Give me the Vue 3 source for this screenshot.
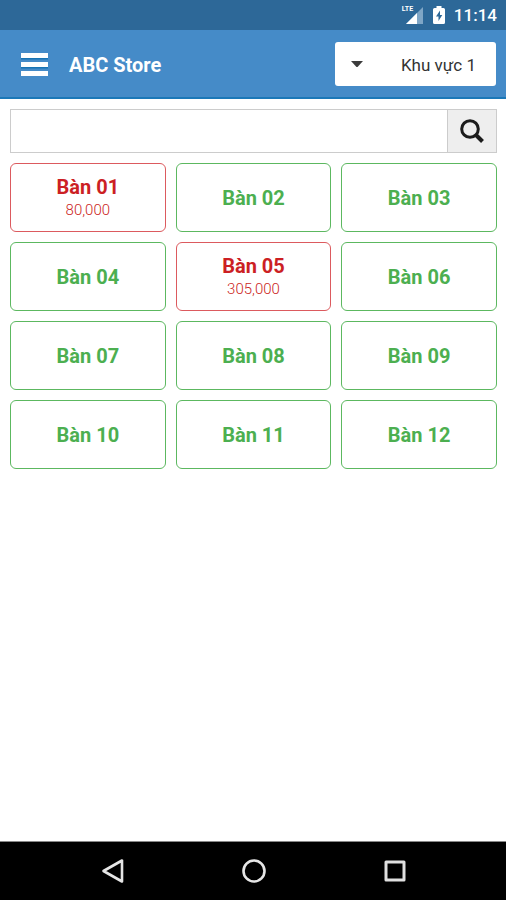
<script setup>
import { ref } from 'vue'

const area = ref('Khu vực 1')
const areas = ['Khu vực 1']
const keyword = ref('')

const tables = [
  { name: 'Bàn 01', total: '80,000' },
  { name: 'Bàn 02' },
  { name: 'Bàn 03' },
  { name: 'Bàn 04' },
  { name: 'Bàn 05', total: '305,000' },
  { name: 'Bàn 06' },
  { name: 'Bàn 07' },
  { name: 'Bàn 08' },
  { name: 'Bàn 09' },
  { name: 'Bàn 10' },
  { name: 'Bàn 11' },
  { name: 'Bàn 12' },
]
</script>

<template>
  <div class="screen">
    <div class="status">
      <div class="signal">
        <span class="lte">LTE</span>
        <svg width="22" height="18" viewBox="0 0 22 18" aria-hidden="true">
          <path d="M4 18 L21 1 V18 Z" fill="#7fa6c6" />
          <path d="M4 18 L15 7 V18 Z" fill="#fff" />
        </svg>
      </div>
      <svg class="battery" width="12" height="18" viewBox="0 0 12 18" aria-hidden="true">
        <path d="M3.500 0 H8.500 V2 H10.500 Q12 2 12 3.500 V16.500 Q12 18 10.500 18 H1.500 Q0 18 0 16.500 V3.500 Q0 2 1.500 2 H3.500 Z" fill="#fff" />
        <path d="M7 4.500 L3 10.500 H5.500 V15 L9.300 9 H7 Z" fill="#2d6898" />
      </svg>
      <span class="clock">11:14</span>
    </div>

    <header class="bar">
      <button class="menu" type="button" aria-label="Menu">
        <svg width="27" height="24" viewBox="0 0 27 24" aria-hidden="true">
          <path d="M0 6.500 H27 M0 15.500 H27" stroke="#1874b4" stroke-width="2" />
          <path d="M0 3.500 H27 M0 12.500 H27 M0 21.500 H27" stroke="#fff" stroke-width="5" />
        </svg>
      </button>
      <h1 class="title">ABC Store</h1>
      <div class="picker">
        <svg class="caret" width="14" height="8" viewBox="0 0 14 8" aria-hidden="true">
          <path d="M1 1 H13 L8 6.500 Q7 7.500 6 6.500 Z" fill="#3c3c3c" />
        </svg>
        <select v-model="area" class="select" aria-label="Khu vực">
          <option v-for="a in areas" :key="a">{{ a }}</option>
        </select>
      </div>
    </header>

    <main class="content">
      <form class="search" @submit.prevent>
        <input v-model="keyword" class="field" type="text" aria-label="Tìm kiếm" />
        <button class="go" type="submit" aria-label="Tìm kiếm">
          <svg width="26" height="26" viewBox="0 0 26 26" fill="none" stroke="#1c1c1c" aria-hidden="true">
            <circle cx="11" cy="11" r="8.300" stroke-width="3" />
            <path d="M17 17 L23.500 23.500" stroke-width="4" />
          </svg>
        </button>
      </form>

      <div class="grid">
        <button
          v-for="t in tables"
          :key="t.name"
          type="button"
          class="table"
          :class="{ busy: t.total }"
        >
          <span class="name">{{ t.name }}</span>
          <span v-if="t.total" class="total">{{ t.total }}</span>
        </button>
      </div>
    </main>

    <nav class="nav">
      <button type="button" aria-label="Quay lại">
        <svg width="24" height="26" viewBox="0 0 24 26" fill="none" stroke="#e6e6e6" stroke-width="2.600" stroke-linejoin="round" aria-hidden="true">
          <path d="M2.500 13 L21 2.500 V23.500 Z" />
        </svg>
      </button>
      <button type="button" aria-label="Trang chính">
        <svg width="24" height="24" viewBox="0 0 24 24" fill="none" stroke="#e6e6e6" stroke-width="2.600" aria-hidden="true">
          <circle cx="12" cy="12" r="10.500" />
        </svg>
      </button>
      <button type="button" aria-label="Ứng dụng gần đây">
        <svg width="22" height="22" viewBox="0 0 22 22" fill="none" stroke="#e0e0e0" stroke-width="3" stroke-linejoin="round" aria-hidden="true">
          <rect x="2" y="2" width="18" height="18" />
        </svg>
      </button>
    </nav>
  </div>
</template>

<style>
body {
  background: #fff;
}
</style>

<style scoped>
.screen {
  display: flex;
  flex-direction: column;
  min-height: 100vh;
  font-family: Roboto, "Noto Sans", sans-serif;
  color: #333;
}

.screen *,
.screen {
  box-sizing: border-box;
}

button,
input,
select {
  margin: 0;
  padding: 0;
  border: 0;
  background: none;
  color: inherit;
  font: inherit;
}

.status {
  display: flex;
  align-items: center;
  justify-content: flex-end;
  height: 30px;
  padding: 0 9px 0 0;
  background: #2d6898;
  color: #fff;
}

.signal {
  position: relative;
  display: flex;
  margin-right: 9px;
}

.lte {
  position: absolute;
  top: 0;
  left: 0;
  font-size: 7px;
  line-height: 7px;
  font-weight: 700;
}

.battery {
  margin-right: 9px;
}

.clock {
  font-size: 17px;
  line-height: 30px;
  font-weight: 500;
}

.bar {
  display: flex;
  align-items: center;
  height: 69px;
  padding: 1px 10px 0 21px;
  background: #458bc8;
  border-bottom: 2px solid #1b78b8;
}

.menu {
  display: flex;
}

.title {
  flex: 1;
  margin: 2px 0 0 21px;
  font-size: 20px;
  line-height: 28px;
  font-weight: 700;
  color: #fff;
}

.picker {
  display: flex;
  align-items: center;
  width: 34%;
  height: 44px;
  padding: 0 20px 0 15px;
  border-radius: 3px;
  background: #fff;
}

.select {
  flex: 1;
  height: 46px;
  padding-top: 2px;
  appearance: none;
  font-size: 17px;
  text-align-last: right;
  color: #333;
}

.content {
  flex: 1;
  padding: 10px 9px 10px 10px;
}

.search {
  display: flex;
  height: 44px;
  border: 1px solid #ccc;
}

.field {
  flex: 1;
  min-width: 0;
  padding: 0 10px;
  font-size: 17px;
}

.go {
  display: flex;
  align-items: center;
  justify-content: center;
  width: 49px;
  border-left: 1px solid #ccc;
  background: #eee;
}

.grid {
  display: grid;
  grid-template-columns: repeat(3, 1fr);
  grid-auto-rows: 69px;
  gap: 10px;
  margin-top: 10px;
}

.table {
  display: flex;
  flex-direction: column;
  align-items: center;
  justify-content: center;
  border: 1px solid #5cb860;
  border-radius: 6px;
  color: #4caf50;
}

.table.busy {
  border-color: #dc5a5e;
  color: #cc1f24;
}

.name {
  font-size: 20px;
  line-height: 24px;
  font-weight: 700;
}

.total {
  font-size: 15px;
  line-height: 22px;
  font-weight: 300;
}

.nav {
  display: flex;
  align-items: center;
  justify-content: center;
  height: 59px;
  padding-left: 2px;
  border-top: 1px solid #888;
  background: #000;
}

.nav button {
  display: flex;
  align-items: center;
  justify-content: center;
  width: 28%;
  height: 58px;
}
</style>
